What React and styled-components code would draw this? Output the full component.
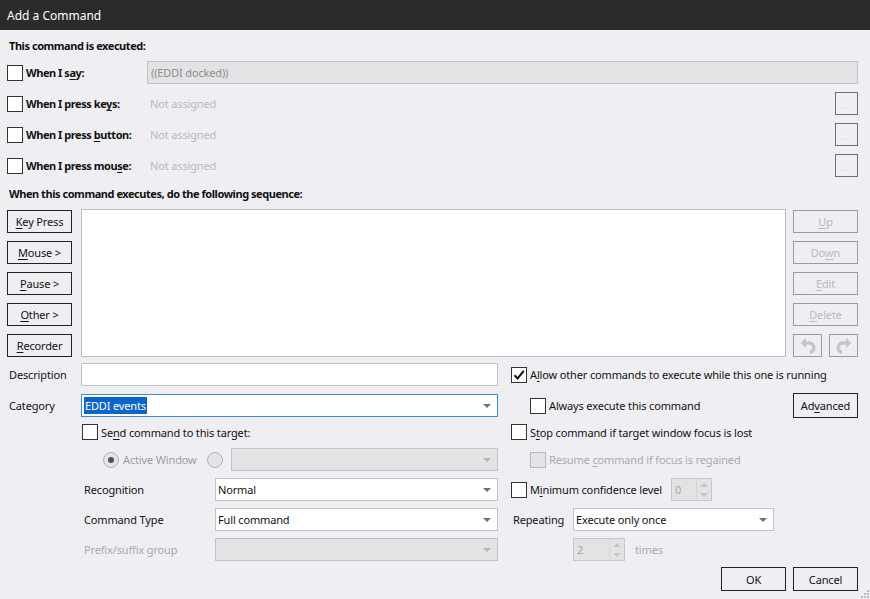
import React from 'react'
import styled, {createGlobalStyle, css} from 'styled-components'

const GlobalStyle = createGlobalStyle`
  html, body { margin: 0; padding: 0; background: #efeff3; }
  body {
    font-family: "Noto Sans", "Liberation Sans", sans-serif;
    font-size: 11px;
    letter-spacing: -0.15px;
    color: #111;
  }
  u { text-decoration: underline; text-underline-offset: 2px; }
`

const Window = styled.div`
  width: 870px;
  height: 599px;
  background: #efeff3;
  display: flex;
  flex-direction: column;
  position: relative;
  overflow: hidden;
`

const TitleBar = styled.div`
  height: 30px;
  flex: none;
  background: #2b2b2b;
  color: #fff;
  font-size: 12px;
  letter-spacing: 0;
  display: flex;
  align-items: center;
  padding-left: 7px;
`

const Body = styled.div`
  padding: 8px 12px 0 7px;
  display: flex;
  flex-direction: column;
`

const SectionTitle = styled.div`
  font-weight: 700;
  letter-spacing: -0.45px;
  height: 16px;
  line-height: 16px;
  padding-left: 2px;
  margin-top: ${p => p.$gap || 0}px;
`

const Triggers = styled.div`
  margin-top: 7px;
  display: flex;
  flex-direction: column;
  gap: 8px;
`

const TriggerRow = styled.div`
  height: 23px;
  display: flex;
  align-items: center;
`

const CheckBox = styled.span`
  width: 14px;
  height: 14px;
  flex: none;
  border: 1px solid ${p => (p.$disabled ? '#b8b8b8' : '#333')};
  background: ${p => (p.$disabled ? '#e4e4e6' : '#fff')};
  display: inline-flex;
  align-items: center;
  justify-content: center;
`

const CheckLabel = styled.label`
  display: flex;
  align-items: center;
  gap: 3px;
  color: ${p => (p.$disabled ? '#a9a9ad' : '#111')};
  white-space: nowrap;
`

const TriggerLabel = styled.span`
  font-weight: 700;
  letter-spacing: -0.45px;
  width: 121px;
  flex: none;
  white-space: nowrap;
`

const Field = styled.div`
  flex: 1;
  height: 23px;
  box-sizing: border-box;
  display: flex;
  align-items: center;
  padding-left: 3px;
  ${p => p.$boxed
    ? css`
      background: #e3e3e5;
      border: 1px solid #c3c3c6;
      color: #8c8c8c;
    `
    : css`color: #b8b8bc;`}
`

const DotsButton = styled.button`
  width: 23px;
  height: 23px;
  box-sizing: border-box;
  border: 1px solid #6e6e70;
  background: #efeff3;
  color: #c8c8cc;
  font-size: 9px;
  letter-spacing: 1px;
  padding: 3px 0 0 1px;
  font-family: inherit;
  flex: none;
`

const Sequence = styled.div`
  margin-top: 7px;
  height: 148px;
  display: grid;
  grid-template-columns: 65px 1fr 65px;
  align-items: start;
`

const ButtonColumn = styled.div`
  padding-top: 1px;
  display: flex;
  flex-direction: column;
  gap: 8px;
`

const Button = styled.button`
  height: ${p => p.$h || 23}px;
  width: ${p => p.$w || 65}px;
  box-sizing: border-box;
  border: 1px solid ${p => (p.$disabled ? '#9c9ca0' : '#222')};
  background: #efeff3;
  color: ${p => (p.$disabled ? '#b9b9bd' : '#111')};
  font-family: inherit;
  font-size: 11px;
  letter-spacing: -0.15px;
  padding: 0;
  display: flex;
  align-items: center;
  justify-content: center;
  flex: none;
`

const IconPair = styled.div`
  display: flex;
  gap: 7px;
`

const ListBox = styled.div`
  height: 148px;
  box-sizing: border-box;
  background: #fff;
  border: 1px solid #bdbdc0;
  margin: 0 7px 0 9px;
`

const Form = styled.div`
  margin-top: 6px;
  display: flex;
  flex-direction: column;
`

const FormRow = styled.div`
  height: ${p => p.$h || 23}px;
  margin-top: ${p => p.$gap || 0}px;
  display: grid;
  grid-template-columns: 491px 1fr;
  column-gap: 13px;
  align-items: center;
`

const Cell = styled.div`
  display: flex;
  align-items: center;
  height: 100%;
  padding-left: ${p => p.$pad || 0}px;
  justify-content: ${p => p.$end ? 'flex-end' : 'flex-start'};
  gap: ${p => p.$gap || 0}px;
`

const Spacer = styled.span`
  flex: ${p => (p.$w ? 'none' : 1)};
  width: ${p => p.$w || 0}px;
`

const Label = styled.span`
  width: ${p => p.$w}px;
  flex: none;
  padding-left: ${p => p.$pad || 0}px;
  box-sizing: border-box;
  color: ${p => (p.$disabled ? '#a9a9ad' : '#111')};
  white-space: nowrap;
`

const TextInput = styled.div`
  flex: 1;
  height: 23px;
  box-sizing: border-box;
  background: #fff;
  border: 1px solid #c3c3c6;
`

const Combo = styled.div`
  flex: ${p => (p.$w ? 'none' : 1)};
  width: ${p => (p.$w ? `${p.$w}px` : 'auto')};
  height: 23px;
  box-sizing: border-box;
  background: ${p => (p.$disabled ? '#e3e3e5' : '#fff')};
  border: 1px solid ${p => (p.$focus ? '#3f8ad2' : '#c3c3c6')};
  display: flex;
  align-items: center;
  padding: 0 6px 0 2px;
`

const ComboText = styled.span`
  flex: 1;
  white-space: nowrap;
  color: #111;
`

const Selected = styled.span`
  background: #0a64cc;
  color: #fff;
  padding: 1px;
`

const Arrow = styled.span`
  width: 0;
  height: 0;
  border-left: 4px solid transparent;
  border-right: 4px solid transparent;
  border-top: 4px solid ${p => (p.$disabled ? '#b4b4b6' : '#707072')};
  flex: none;
`

const Radio = styled.span`
  width: 14px;
  height: 14px;
  border-radius: 50%;
  border: 1px solid #b2b2b5;
  background: #e4e4e6;
  display: inline-flex;
  align-items: center;
  justify-content: center;
  flex: none;
  &::after {
    content: '';
    display: ${p => (p.$on ? 'block' : 'none')};
    width: 6px;
    height: 6px;
    border-radius: 50%;
    background: #505050;
  }
`

const RadioLabel = styled.span`
  color: #9d9da1;
  margin-left: 4px;
  margin-right: 10px;
`

const Spin = styled.div`
  width: ${p => p.$w}px;
  height: ${p => p.$h || 23}px;
  margin-left: ${p => p.$ml || 0}px;
  box-sizing: border-box;
  background: #e3e3e5;
  border: 1px solid #c8c8cb;
  display: flex;
  align-items: stretch;
  color: #a4a4a8;
  flex: none;
`

const SpinValue = styled.span`
  flex: 1;
  display: flex;
  align-items: center;
  padding-left: 3px;
`

const SpinArrows = styled.span`
  width: 14px;
  display: flex;
  flex-direction: column;
  justify-content: center;
  align-items: center;
  gap: 6px;
  border-left: 1px solid #d6d6d8;
`

const SmallTri = styled.span`
  width: 0;
  height: 0;
  border-left: 4px solid transparent;
  border-right: 4px solid transparent;
  ${p => p.$up
    ? css`border-bottom: 4px solid #c6c6c9;`
    : css`border-top: 4px solid #c6c6c9;`}
`

const Muted = styled.span`
  color: #a9a9ad;
  margin-left: 10px;
`

const Grip = styled.svg`
  position: absolute;
  right: 1px;
  bottom: 1px;
`

const Check = () => (
  <svg width="14" height="14" viewBox="0 0 14 14">
    <path d="M2.5 7.2 L5.6 10.5 L11.8 2.8" fill="none" stroke="#111" strokeWidth="2" />
  </svg>
)

const UndoIcon = ({flip}) => (
  <svg width="16" height="17" viewBox="0 0 16 17" style={flip ? {transform: 'scaleX(-1)'} : undefined}>
    <path d="M0.5 6 L6 0.8 L6 11 Z" fill="#c6c6c9" />
    <path d="M5 6 H8 A4.6 4.6 0 0 1 10 15.5" fill="none" stroke="#c6c6c9" strokeWidth="3.4" />
  </svg>
)

const Checkbox = ({checked, disabled, children}) => (
  <CheckLabel $disabled={disabled}>
    <CheckBox $disabled={disabled}>{checked && <Check />}</CheckBox>
    {children && <span>{children}</span>}
  </CheckLabel>
)

const Dropdown = ({children, disabled, focus, w}) => (
  <Combo $disabled={disabled} $focus={focus} $w={w}>
    <ComboText>{children}</ComboText>
    <Arrow $disabled={disabled} />
  </Combo>
)

const Spinner = ({value, w, ml}) => (
  <Spin $w={w} $ml={ml}>
    <SpinValue>{value}</SpinValue>
    <SpinArrows>
      <SmallTri $up />
      <SmallTri />
    </SpinArrows>
  </Spin>
)

const triggers = [
  {label: <>When I s<u>a</u>y:</>},
  {label: <>When I press ke<u>y</u>s:</>},
  {label: <>When I press <u>b</u>utton:</>},
  {label: <>When I press mou<u>s</u>e:</>},
]

export default function App() {
  return (
    <Window>
      <GlobalStyle />
      <TitleBar>Add a Command</TitleBar>
      <Body>
        <SectionTitle>This command is executed:</SectionTitle>
        <Triggers>
          {triggers.map((t, i) => (
            <TriggerRow key={i}>
              <CheckLabel>
                <CheckBox />
                <TriggerLabel>{t.label}</TriggerLabel>
              </CheckLabel>
              {i === 0 ? (
                <Field $boxed>((EDDI docked))</Field>
              ) : (
                <>
                  <Field>Not assigned</Field>
                  <DotsButton>...</DotsButton>
                </>
              )}
            </TriggerRow>
          ))}
        </Triggers>

        <SectionTitle $gap={9}>When this command executes, do the following sequence:</SectionTitle>
        <Sequence>
          <ButtonColumn>
            <Button><span><u>K</u>ey Press</span></Button>
            <Button><span><u>M</u>ouse &gt;</span></Button>
            <Button><span><u>P</u>ause &gt;</span></Button>
            <Button><span><u>O</u>ther &gt;</span></Button>
            <Button><span><u>R</u>ecorder</span></Button>
          </ButtonColumn>
          <ListBox />
          <ButtonColumn>
            <Button $disabled><span><u>U</u>p</span></Button>
            <Button $disabled><span>Do<u>w</u>n</span></Button>
            <Button $disabled><span><u>E</u>dit</span></Button>
            <Button $disabled><span><u>D</u>elete</span></Button>
            <IconPair>
              <Button $disabled $w={29}><UndoIcon /></Button>
              <Button $disabled $w={29}><UndoIcon flip /></Button>
            </IconPair>
          </ButtonColumn>
        </Sequence>

        <Form>
          <FormRow>
            <Cell>
              <Label $w={74} $pad={2}>Description</Label>
              <TextInput />
            </Cell>
            <Cell>
              <Checkbox checked>A<u>l</u>low other commands to execute while this one is running</Checkbox>
            </Cell>
          </FormRow>

          <FormRow $gap={7} $h={24}>
            <Cell>
              <Label $w={74} $pad={2}>Category</Label>
              <Combo $focus>
                <ComboText><Selected>EDDI events</Selected></ComboText>
                <Arrow />
              </Combo>
            </Cell>
            <Cell $pad={19}>
              <Checkbox>Always execute this command</Checkbox>
              <Spacer />
              <Button $h={25}><span>Ad<u>v</u>anced</span></Button>
            </Cell>
          </FormRow>

          <FormRow $gap={4} $h={22}>
            <Cell $pad={75}>
              <Checkbox>Se<u>n</u>d command to this target:</Checkbox>
            </Cell>
            <Cell>
              <Checkbox>S<u>t</u>op command if target window focus is lost</Checkbox>
            </Cell>
          </FormRow>

          <FormRow $gap={5}>
            <Cell $pad={96}>
              <Radio $on />
              <RadioLabel>Active Window</RadioLabel>
              <Radio />
              <Spacer $w={8} />
              <Dropdown disabled />
            </Cell>
            <Cell $pad={19}>
              <Checkbox disabled>Resume <u>c</u>ommand if focus is regained</Checkbox>
            </Cell>
          </FormRow>

          <FormRow $gap={7}>
            <Cell $pad={77}>
              <Label $w={131}>Recognition</Label>
              <Dropdown>Normal</Dropdown>
            </Cell>
            <Cell>
              <Checkbox>M<u>i</u>nimum confidence level</Checkbox>
              <Spinner value="0" w={41} ml={9} />
            </Cell>
          </FormRow>

          <FormRow $gap={7}>
            <Cell $pad={77}>
              <Label $w={131}>Command Type</Label>
              <Dropdown>Full command</Dropdown>
            </Cell>
            <Cell $pad={2}>
              <Label $w={60}>Repeating</Label>
              <Dropdown w={201}>Execute only once</Dropdown>
            </Cell>
          </FormRow>

          <FormRow $gap={7}>
            <Cell $pad={77}>
              <Label $w={131} $disabled>Prefix/suffix group</Label>
              <Dropdown disabled />
            </Cell>
            <Cell $pad={62}>
              <Spinner value="2" w={52} />
              <Muted>times</Muted>
            </Cell>
          </FormRow>

          <FormRow $gap={6} $h={24}>
            <Cell />
            <Cell $end $gap={7}>
              <Button $h={24}>OK</Button>
              <Button $h={24}>Cancel</Button>
            </Cell>
          </FormRow>
        </Form>
      </Body>
      <Grip width="8" height="8" viewBox="0 0 8 8">
        {[[6, 0], [6, 3], [3, 3], [6, 6], [3, 6], [0, 6]].map(([x, y], i) => (
          <rect key={i} x={x} y={y} width="2" height="2" fill="#bcbcc0" />
        ))}
      </Grip>
    </Window>
  )
}
